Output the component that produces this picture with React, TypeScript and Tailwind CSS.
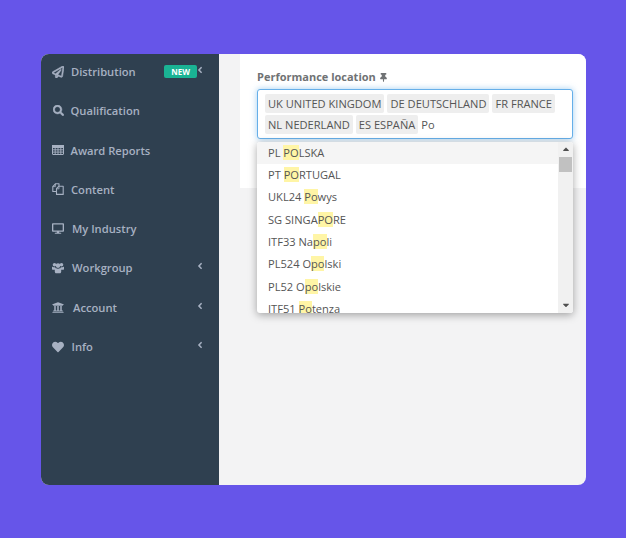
import { FaRegPaperPlane, FaSearch, FaDesktop, FaUniversity, FaHeart, FaThumbtack, FaAngleLeft, FaCaretUp, FaCaretDown } from "react-icons/fa";
import type { ReactNode } from "react";

function TableIcon() {
  return (
    <svg width="12" height="10" viewBox="0 0 12 10" fill="none" stroke="currentColor" strokeWidth="1">
      <rect x="0.5" y="0.5" width="11" height="9" rx="0.5" />
      <path d="M0 2.5h12M0 4.8h12M0 7.1h12M3.2 0v10M6 0v10M8.8 0v10" strokeWidth="0.9" />
      <path d="M0 0.5h12v2H0z" fill="currentColor" />
    </svg>
  );
}

function FilesIcon() {
  return (
    <svg width="12" height="12" viewBox="0 0 12 12" fill="none" stroke="currentColor" strokeWidth="1.1" strokeLinejoin="round">
      <path d="M4.5 8.5H0.8V3.6L3.4 0.8H7V3" />
      <path d="M0.8 3.6H3.4V0.8" strokeWidth="0.8" />
      <path d="M4.5 11.4V5.6L6.9 3.2H11.2V11.4Z" />
      <path d="M4.5 5.8H7V3.2" strokeWidth="0.8" />
    </svg>
  );
}

function UsersIcon() {
  return (
    <svg width="13" height="12" viewBox="0 0 13 12" fill="currentColor">
      <circle cx="2.7" cy="2.5" r="1.9" />
      <circle cx="10.3" cy="2.5" r="1.9" />
      <path d="M0 5.2C0 4.8 0.5 4.6 1 4.8C2 5.4 3 5.3 3.6 5C3.4 6 3.2 7 3.6 7.8H0.6C0.2 7.8 0 7.4 0 7Z" />
      <path d="M13 5.2C13 4.8 12.5 4.6 12 4.8C11 5.4 10 5.3 9.4 5C9.6 6 9.8 7 9.4 7.8H12.4C12.8 7.8 13 7.4 13 7Z" />
      <circle cx="6.5" cy="3.4" r="2.5" />
      <path d="M3.9 5.8C4.6 6.4 5.4 6.8 6.5 6.8C7.6 6.8 8.4 6.4 9.1 5.8C9.8 6.2 10 7.4 10 9.4C10 10.8 9.4 11.6 8.4 11.6H4.6C3.6 11.6 3 10.8 3 9.4C3 7.4 3.2 6.2 3.9 5.8Z" />
    </svg>
  );
}

const items = [
  { icon: <FaRegPaperPlane size={12} stroke="currentColor" strokeWidth={24} />, label: "Distribution", gap: "gap-[7px]", badge: true, arrow: true },
  { icon: <FaSearch size={11} stroke="currentColor" strokeWidth={20} />, label: "Qualification", gap: "gap-[6.5px]", arrow: false },
  { icon: <TableIcon />, label: "Award Reports", gap: "gap-[6.5px]", arrow: false },
  { icon: <FilesIcon />, label: "Content", gap: "gap-[7px]", arrow: false },
  { icon: <FaDesktop size={13} />, label: "My Industry", gap: "gap-2", arrow: false },
  { icon: <UsersIcon />, label: "Workgroup", gap: "gap-2", arrow: true },
  { icon: <FaUniversity size={13} />, label: "Account", gap: "gap-[9px]", arrow: true },
  { icon: <FaHeart size={12} />, label: "Info", gap: "gap-[7.5px]", arrow: true },
];

function H({ children }: { children: ReactNode }) {
  return <span className="inline-block bg-[#fff5a6] leading-[15px]">{children}</span>;
}

function Tag({ children }: { children: ReactNode }) {
  return <span className="rounded-[2px] bg-[#eeeeee] px-[3px] py-[2px] leading-[15px] whitespace-nowrap">{children}</span>;
}

const options: ReactNode[] = [
  <>PL <H>PO</H>LSKA</>,
  <>PT <H>PO</H>RTUGAL</>,
  <>UKL24 <H>Po</H>wys</>,
  <>SG SINGA<H>PO</H>RE</>,
  <>ITF33 Na<H>po</H>li</>,
  <>PL524 O<H>po</H>lski</>,
  <>PL52 O<H>po</H>lskie</>,
  <>ITF51 <H>Po</H>tenza</>,
];

export default function App() {
  return (
    <div className="h-[538px] w-[626px] overflow-hidden bg-[#6655e9] pt-[54px] pl-[41px] font-['Open_Sans',sans-serif]">
      <div className="flex h-[431px] w-[545px] overflow-hidden rounded-lg bg-[#f3f3f4]">
        <aside className="w-[178px] shrink-0 bg-[#2f4050] text-[#a7b1c2]">
          {items.map((it) => (
            <div key={it.label} className="relative flex h-[39.3px] items-start pt-[10px] pl-[11px] text-[11.2px] leading-[15px] font-semibold">
              <div className={`flex items-center ${it.gap}`}>
                <span className="flex w-[12px] justify-center">{it.icon}</span>
                <span>{it.label}</span>
              </div>
              {it.badge && (
                <span className="absolute top-[11px] left-[123px] flex h-[13px] w-[33px] items-center justify-center rounded-[2px] bg-[#1ab394] text-[8px] font-bold text-white">NEW</span>
              )}
              {it.arrow && <FaAngleLeft size={10} className="absolute top-[11px] left-[154px]" />}
            </div>
          ))}
        </aside>
        <main className="ml-[21px] h-[134px] flex-1 bg-white pt-[15px] pl-[17px]">
          <div className="flex items-center gap-[3px] text-[11px] font-bold text-[#6f7274]">
            Performance location <FaThumbtack size={9} />
          </div>
          <div className="relative mt-[3px] w-[316px]">
            <div className="flex h-[50px] flex-wrap content-start gap-x-[3px] gap-y-[2px] rounded-[3px] border border-[#66afe9] bg-white px-[7px] pt-[4px] text-[11.1px] text-[#555555] shadow-[0_0_6px_rgba(102,175,233,0.6)]">
              <Tag>UK UNITED KINGDOM</Tag>
              <Tag>DE DEUTSCHLAND</Tag>
              <Tag>FR FRANCE</Tag>
              <Tag>NL NEDERLAND</Tag>
              <Tag>ES ESPAÑA</Tag>
              <span className="leading-[19px]">Po</span>
            </div>
            <div className="absolute top-[53px] left-0 flex h-[171px] w-[316px] overflow-hidden rounded-[3px] bg-white text-[11.1px] text-[#555555] shadow-[0_2px_8px_rgba(0,0,0,0.35)]">
              <div className="flex-1 overflow-hidden pt-[0.5px]">
                {options.map((o, i) => (
                  <div key={i} className={`flex h-[22.3px] shrink-0 items-center pl-[11px] whitespace-pre ${i === 0 ? "bg-[#f5f5f5]" : ""}`}>
                    <span>{o}</span>
                  </div>
                ))}
              </div>
              <div className="flex w-[15px] flex-col items-center bg-[#f1f1f1] text-[#505050]">
                <div className="flex h-[15px] shrink-0 items-center justify-center"><FaCaretUp size={10} /></div>
                <div className="h-[15px] w-[13px] bg-[#c1c1c1]" />
                <div className="mt-auto flex h-[15px] shrink-0 items-center justify-center"><FaCaretDown size={10} /></div>
              </div>
            </div>
          </div>
        </main>
      </div>
    </div>
  );
}
